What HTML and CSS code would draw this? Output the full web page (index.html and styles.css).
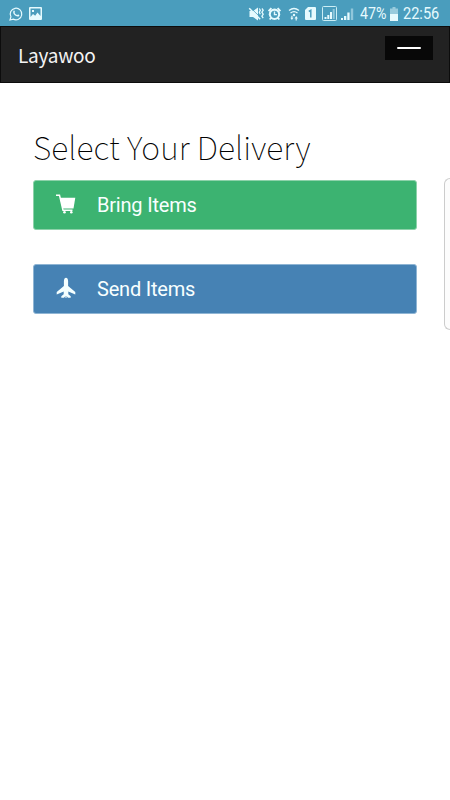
FILE: index.html
```html
<!DOCTYPE html>
<html lang="en">
<head>
<meta charset="utf-8">
<meta name="viewport" content="width=device-width, initial-scale=1">
<title>Layawoo</title>
<link rel="stylesheet" href="styles.css">
</head>
<body>
<div class="status">
  <svg class="whatsapp" width="14" height="14" viewBox="0 0 14 14"><path d="M1 13l.9-3.200A5.800 5.800 0 1 1 4.200 12.100z" fill="none" stroke="#e6fafe" stroke-width="1.200"/><path d="M4.400 4c.6-.8 1.200-.5 1.500.7.200.6-.6.800-.3 1.200.6 1.100 1.400 1.800 2.400 2.200.5.200.7-.9 1.200-.7 1.200.5 1.500.8.900 1.500C8.600 10.800 3 7.300 4.400 4z" fill="#e6fafe"/></svg>
  <svg class="photo" width="13" height="13" viewBox="0 0 13 13"><path fill="#e6fafe" fill-rule="evenodd" d="M1 0h11q1 0 1 1v11q0 1-1 1H1q-1 0-1-1V1q0-1 1-1zM1.500 1.500v8.500L4 7l2.200 1.700L8.500 5.500l3 3.500V1.500zM3 3h2v2H3z"/></svg>
  <div class="indicators">
    <svg width="112" height="18" viewBox="0 0 112 18">
      <g fill="#e6fafe">
        <path d="M1.500 6h3.500L10 2.500v13L5 12H1.500z"/>
        <path d="M2.800 3l10 9.800" stroke="#4a9dbd" stroke-width=".8"/>
        <path d="M1.200 3.200l11 11" stroke="#e6fafe" stroke-width="1.500"/>
        <path d="M11.300 3.500l1 1.700-1 2 1 2M13.900 3.500l1.300 1.700-1.300 2 1.300 2-1.300 2 1.300 2" fill="none" stroke="#e6fafe" stroke-width="1.300"/>
        <circle cx="26.500" cy="9.300" r="5.700"/>
        <path d="M20.600 6.200l2.800-3M29.600 3.200l2.800 3M23 13l-1.300 1.500M30 13l1.300 1.500" stroke="#e6fafe" stroke-width="1.900"/>
        <circle cx="26.500" cy="9.300" r="3.600" fill="#4a9dbd"/>
        <path d="M26.500 6.500v3.100h2.400" fill="none" stroke="#e6fafe" stroke-width="1.400"/>
        <path d="M41 5.500q5-4 10 0M42.500 8.100q3.500-2.800 7 0" fill="none" stroke="#e6fafe" stroke-width="1.300"/>
        <circle cx="46" cy="10" r="1.200"/>
        <path d="M42.300 12.700h1v-2h1.200v2h1l-1.600 2.300zM46.500 13.500l1.700-2.600 1.700 2.600h-1.100v2h-1.200v-2z"/>
        <path d="M60 2h7q1 0 1 1v11q0 1-1 1h-9q-1 0-1-1V5z"/>
        <path d="M60.800 6.500l2-1.200V12.500" fill="none" stroke="#4a9dbd" stroke-width="1.500"/>
        <rect x="74.500" y="1.500" width="14" height="14" rx="1" fill="none" stroke="#cbeef5"/>
        <path d="M76.500 12h2v2h-2zM79.300 10h2v4h-2zM82 7h2v7h-2z"/>
        <path opacity=".45" d="M84.700 4h2v10h-2z"/>
        <path d="M93 13h2v2h-2zM96 11h2.300v4H96zM99.300 7.500h2.300V15h-2.300z"/>
        <path opacity=".45" d="M102.800 3.500h2.400V15h-2.400z"/>
      </g>
    </svg>
    <span class="percent">47%</span>
    <svg class="battery" width="8" height="14" viewBox="0 0 8 14"><path opacity=".5" fill="#e6fafe" d="M2.500 0h3v1.500H8v5.500H0v-5.500h2.500z"/><path fill="#e6fafe" d="M0 7h8v7H0z"/></svg>
    <span class="clock">22:56</span>
  </div>
</div>
<header class="navbar">
  <span class="brand">Layawoo</span>
  <button class="toggle" aria-label="Menu"><span class="bar"></span></button>
</header>
<main class="content">
  <div class="choices">
    <h1 class="title">Select Your Delivery</h1>
    <a class="choice bring">
      <svg width="22" height="22" viewBox="0 0 22 22"><path d="M1 1.200h3.500L8 16.300h9.500" fill="none" stroke="#fff" stroke-width="1.500"/><path fill="#fff" d="M5 3.700H20.300L18.500 14.500H7.500z"/><circle cx="9.500" cy="18.300" r="1.300" fill="#fff"/><circle cx="16.300" cy="18.300" r="1.300" fill="#fff"/></svg>
      <span>Bring Items</span>
    </a>
    <a class="choice send">
      <svg width="22" height="22" viewBox="0 0 22 22"><path fill="#f4ffff" d="M8.900 2.900Q9.200-.2 11-.2T13.100 2.900V7.900L20.300 13.900V16.400L13.300 13.400V16.200L15.700 18.300V19.700H13L11.500 17.900V19.900H10.500V17.900L9 19.700H6.300V18.300L8.700 16.200V13.400L1.700 16.400V13.900L8.900 7.900z"/></svg>
      <span>Send Items</span>
    </a>
  </div>
  <aside class="drawer"></aside>
</main>
</body>
</html>
```

FILE: styles.css
```css
* { box-sizing: border-box; }
body {
  margin: 0;
  height: 800px;
  overflow: hidden;
  background: #fff;
  font-family: Roboto, sans-serif;
}
svg { display: block; flex: none; overflow: visible; }
.status {
  display: flex;
  align-items: center;
  height: 26px;
  padding: 1px 11px 0 9px;
  background: #4a9dbd;
  color: #e6fafe;
}
.photo { margin-left: 6px; }
.indicators {
  display: flex;
  align-items: center;
  margin-left: auto;
  font-size: 16px;
  line-height: 24px;
}
.percent, .clock {
  white-space: nowrap;
  transform-origin: left center;
}
.percent { width: 27px; transform: scaleX(.89); }
.battery { margin: 0 5px 0 3px; }
.clock { width: 36px; transform: scaleX(.91); }
.navbar {
  display: flex;
  align-items: flex-start;
  justify-content: space-between;
  height: 57px;
  padding: 9px 16px 0 17px;
  background: #222;
  border: 1px solid #0c0c0c;
}
.brand {
  font: 400 19px/38px "Noto Sans CJK JP", sans-serif;
  letter-spacing: -0.25px;
  color: #f4f4f4;
}
.toggle {
  display: flex;
  align-items: center;
  justify-content: center;
  width: 48px;
  height: 24px;
  padding: 0;
  border: 0;
  background: #080808;
}
.bar { width: 24px; height: 2px; background: #fff; border-radius: 1px; }
.content {
  display: flex;
  justify-content: space-between;
  height: 717px;
  padding-left: 33px;
}
.choices { width: 384px; padding-top: 40px; }
.title {
  margin: 0;
  height: 57px;
  font: 100 32px/47px "Noto Sans CJK JP", sans-serif;
  letter-spacing: 0.1px;
  color: #000;
  white-space: nowrap;
}
.choice {
  display: flex;
  align-items: center;
  height: 50px;
  padding-left: 21px;
  margin-bottom: 34px;
  border: 1px solid;
  border-radius: 3px;
  font-size: 20px;
  letter-spacing: -0.2px;
  color: #f8ffff;
}
.choice span { margin-left: 20px; }
.bring { background: #3cb371; border-color: #8dd2aa; }
.send { background: #4682b4; border-color: #8fb5d4; }
.drawer {
  width: 6px;
  height: 152px;
  margin-top: 95px;
  border: 1px solid #ccc;
  border-right: 0;
  border-radius: 6px 0 0 6px;
  background: #fcfcfc;
}
```
